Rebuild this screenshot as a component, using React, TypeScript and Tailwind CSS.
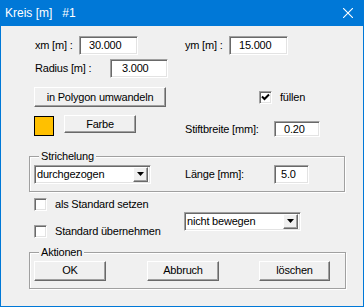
import React from "react";

const sunken =
  "border border-t-[#a0a0a0] border-l-[#a0a0a0] border-r-white border-b-white shadow-[inset_1px_1px_0_#696969,inset_-1px_-1px_0_#e3e3e3] bg-white";
const raised =
  "border border-t-white border-l-white border-r-[#696969] border-b-[#696969] shadow-[inset_-1px_-1px_0_#a0a0a0] bg-[#f0f0f0] flex items-center justify-center";
const etched =
  "border border-[#a0a0a0] shadow-[inset_1px_1px_0_#fff,1px_1px_0_#fff]";

function Input({ value, w, h = 19, pl = 10 }: { value: string; w: number; h?: number; pl?: number }) {
  return (
    <div className={`${sunken} flex items-center shrink-0`} style={{ width: w, height: h, paddingLeft: pl - 1 }}>
      {value}
    </div>
  );
}

function Button({ label, w, h = 20 }: { label: string; w: number; h?: number }) {
  return (
    <div className={`${raised} shrink-0`} style={{ width: w, height: h }}>
      {label}
    </div>
  );
}

function Check({ checked = false }: { checked?: boolean }) {
  return (
    <div className={`${sunken} w-[13px] h-[13px] shrink-0 relative`}>
      {checked && (
        <svg className="absolute left-[1px] top-[1px]" width="9" height="9" viewBox="0 0 9 9">
          <path d="M1 3.5 L3.5 6 L8 1.5" stroke="#000" strokeWidth="2" fill="none" />
        </svg>
      )}
    </div>
  );
}

function Select({ value, w }: { value: string; w: number }) {
  return (
    <div className={`${sunken} flex items-center shrink-0 h-[19px] pl-[2px] pr-[2px]`} style={{ width: w }}>
      <span className="flex-1">{value}</span>
      <div className={`${raised} w-[15px] h-[15px]`}>
        <svg width="7" height="4" viewBox="0 0 7 4">
          <path d="M0 0 H7 L3.5 4 Z" fill="#000" />
        </svg>
      </div>
    </div>
  );
}

export default function App() {
  return (
    <div
      className="w-[364px] h-[307px] bg-[#0078d7] flex flex-col text-black"
      style={{ fontFamily: '"Liberation Sans", Arial, sans-serif' }}
    >
      <div className="h-[26px] flex items-center justify-between pl-[5px] pr-[11px] text-white text-[12px] shrink-0">
        <span className="whitespace-pre">Kreis [m]   #1</span>
        <svg width="10" height="10" viewBox="0 0 10 10">
          <path d="M0 0 L10 10 M10 0 L0 10" stroke="#fff" strokeWidth="1.1" />
        </svg>
      </div>
      <div className="mx-[1px] mb-[1px] flex-1 bg-[#f0f0f0] text-[11px] tracking-[-0.2px] flex flex-col">
        {/* row 1 */}
        <div className="flex items-center mt-[10px] h-[19px] pl-[34px]">
          <span className="w-[44px]">xm [m] :</span>
          <Input value="30.000" w={59} />
          <span className="w-[44px] ml-[47px]">ym [m] :</span>
          <Input value="15.000" w={59} />
        </div>
        {/* row 2 */}
        <div className="flex items-center mt-[4px] h-[19px] pl-[34px]">
          <span className="w-[75px]">Radius [m] :</span>
          <Input value="3.000" w={58} pl={12} />
        </div>
        {/* row 3 */}
        <div className="flex items-center mt-[9px] pl-[33px]">
          <Button label="in Polygon umwandeln" w={132} />
          <div className="ml-[93px]">
            <Check checked />
          </div>
          <span className="ml-[8px]">füllen</span>
        </div>
        {/* row 4 */}
        <div className="flex items-start mt-[8px] pl-[33px]">
          <div className="mt-[1px] w-[20px] h-[20px] bg-[#ffc000] border border-black shrink-0" />
          <div className="ml-[10px]">
            <Button label="Farbe" w={72} h={18} />
          </div>
          <div className="flex items-center ml-[49px] mt-[6px]">
            <span className="w-[89px]">Stiftbreite [mm]:</span>
            <Input value="0.20" w={46} h={16} />
          </div>
        </div>
        {/* Strichelung group */}
        <div className={`relative ml-[28px] mt-[18px] w-[316px] h-[36px] ${etched} flex items-start pl-[4px] pt-[8px]`}>
          <span className="absolute left-[9px] top-[-8px] px-[2px] bg-[#f0f0f0] leading-[14px]">Strichelung</span>
          <Select value="durchgezogen" w={117} />
          <span className="ml-[34px] w-[89px] h-[19px] flex items-center">Länge [mm]:</span>
          <Input value="5.0" w={35} pl={7} />
        </div>
        {/* checkboxes */}
        <div className="flex mt-[6px] pl-[33px]">
          <div className="w-[150px] flex flex-col gap-[14px]">
            <div className="flex items-center h-[13px]">
              <Check />
              <span className="ml-[8px]">als Standard setzen</span>
            </div>
            <div className="flex items-center h-[13px]">
              <Check />
              <span className="ml-[8px]">Standard übernehmen</span>
            </div>
          </div>
          <div className="mt-[14px]">
            <Select value="nicht bewegen" w={117} />
          </div>
        </div>
        {/* Aktionen group */}
        <div className={`relative ml-[28px] mt-[14px] w-[317px] h-[37px] ${etched} flex items-start pl-[4px] pt-[8px]`}>
          <span className="absolute left-[9px] top-[-8px] px-[2px] bg-[#f0f0f0] leading-[14px]">Aktionen</span>
          <Button label="OK" w={72} />
          <div className="ml-[41px]">
            <Button label="Abbruch" w={72} />
          </div>
          <div className="ml-[40px]">
            <Button label="löschen" w={71} />
          </div>
        </div>
      </div>
    </div>
  );
}
